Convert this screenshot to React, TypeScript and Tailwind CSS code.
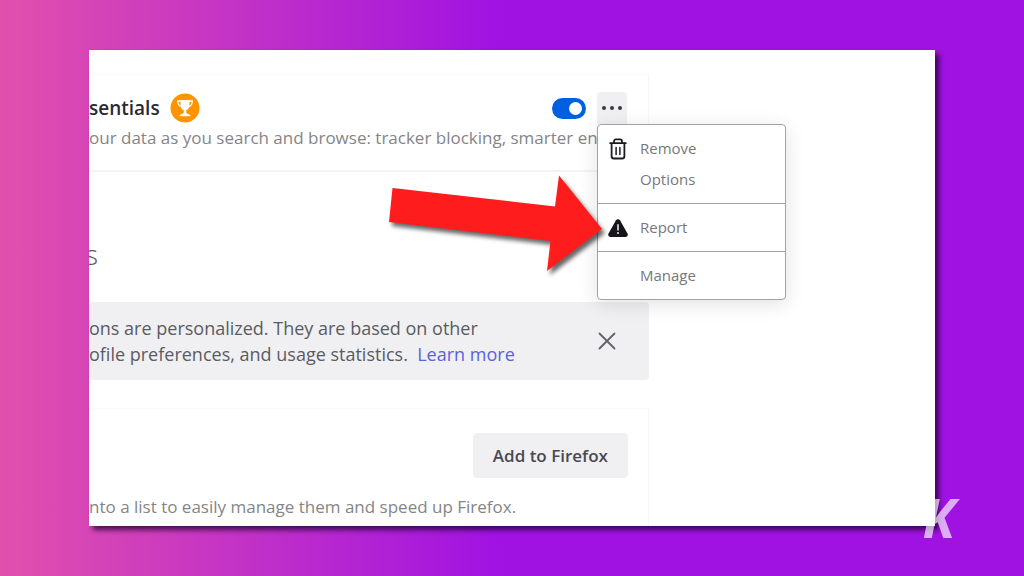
import React, { useState } from 'react';

interface MenuItem {
  label: string;
  icon?: React.ReactNode;
}

function TrashIcon() {
  return (
    <svg viewBox="0 0 18 22" className="h-[22px] w-[18px]" fill="none" stroke="#1c1b22" strokeWidth="1.8" strokeLinecap="round" aria-hidden="true">
      <path d="M1.2 5.2h15.6" />
      <path d="M5 5V3.4C5 2.2 5.8 1.4 7 1.4h4c1.2 0 2 .8 2 2V5" />
      <path d="M2.6 5.4v12.8c0 1.4.9 2.3 2.3 2.3h8.2c1.4 0 2.3-.9 2.3-2.3V5.4" />
      <path d="M7.1 9.6v6.8M10.9 9.6v6.8" strokeWidth="1.5" />
    </svg>
  );
}

function WarningIcon() {
  return (
    <svg viewBox="0 0 20 18" className="h-[18px] w-5" aria-hidden="true">
      <path d="M8 1.3a2.3 2.3 0 0 1 4 0l7.5 13.3c.9 1.6-.2 3.4-2 3.4h-15c-1.8 0-2.9-1.8-2-3.4z" fill="#151419" />
      <path d="M10 5.8v5" stroke="#d8d8da" strokeWidth="1.7" strokeLinecap="round" />
      <circle cx="10" cy="14" r="1.1" fill="#d8d8da" />
    </svg>
  );
}

function TrophyBadge() {
  return (
    <svg viewBox="0 0 30 30" className="size-[30px]" role="img" aria-label="Recommended">
      <circle cx="15" cy="15" r="14.5" fill="#ff9400" />
      <path d="M10.5 7h9v5.3c0 2.6-1.5 4.4-3.2 5V20c0 1 4.200.8 4.200 3.200h-11c0-2.400 4.200-2.200 4.200-3.200v-2.700c-1.700-.6-3.200-2.400-3.200-5z" fill="#fff" />
      <path d="M11 8H7.7c0 3.4 1.200 5.200 4 5.600M19 8h3.300c0 3.400-1.200 5.200-4 5.600" fill="none" stroke="#fff" strokeWidth="1.3" />
    </svg>
  );
}

function PointerArrow() {
  return (
    <svg
      viewBox="0 0 224 110"
      className="pointer-events-none absolute top-[46px] -left-[213px] z-20 h-[110px] w-[224px] overflow-visible drop-shadow-[3px_4px_2px_rgba(0,0,0,0.6)]"
      aria-hidden="true"
    >
      <path d="M8.5 18 171 36.5l4-31L218 59l-55 42 3.5-30L5 52z" fill="#ff1c1c" />
    </svg>
  );
}

// Groups are split by a divider line
const menuGroups: MenuItem[][] = [
  [{ label: 'Remove', icon: <TrashIcon /> }, { label: 'Options' }],
  [{ label: 'Report', icon: <WarningIcon /> }],
  [{ label: 'Manage' }],
];

function MoreOptions() {
  return (
    <div className="relative">
      <button type="button" aria-label="More options" aria-expanded="true" className="flex h-8 w-[30px] items-center justify-center gap-1 rounded-t-sm bg-[#f0f0f2]">
        <span className="size-1 rounded-full bg-[#3a3940]" />
        <span className="size-1 rounded-full bg-[#3a3940]" />
        <span className="size-1 rounded-full bg-[#3a3940]" />
      </button>

      <div className="absolute top-full left-0 z-10">
        <div role="menu" className="w-[189px] divide-y divide-[#a2a2a4] rounded border border-[#a2a2a4] bg-white shadow-[0_4px_20px_rgba(0,0,0,0.12)]">
          {menuGroups.map((group) => (
            <div key={group[0].label} className="py-2">
              {group.map((item) => (
                <button key={item.label} type="button" role="menuitem" className="flex h-[31px] w-full items-center gap-3 px-[10px] text-left text-[15px] text-[#77777c]">
                  <span className="flex w-5 justify-center">{item.icon}</span>
                  {item.label}
                </button>
              ))}
            </div>
          ))}
        </div>
        <PointerArrow />
      </div>
    </div>
  );
}

export default function App() {
  const [enabled, setEnabled] = useState(true);
  const [showNotice, setShowNotice] = useState(true);

  return (
    <div className="relative min-h-screen bg-[linear-gradient(90deg,#e250ac_0%,#a012e2_49%)] px-[89px] py-[50px] font-['Open_Sans',sans-serif]">
      <main className="overflow-hidden bg-white pt-6 shadow-[4px_4px_5px_rgba(30,0,50,0.75)]">
        <div className="w-full max-w-[560px]">
          {/* Installed add-on */}
          <section className="border-t border-r border-b-2 border-t-[#fafafa] border-r-[#f7f7f8] border-b-[#f4f4f5] pt-[17px] pb-[18px]">
            <div className="flex items-center pr-[21px]">
              <h2 className="text-[19px] font-semibold text-[#2b2a33]">sentials</h2>
              <span className="ml-[10px]"><TrophyBadge /></span>
              <input
                type="checkbox"
                role="switch"
                aria-label="Enable extension"
                checked={enabled}
                onChange={(e) => setEnabled(e.target.checked)}
                className="mr-[11px] ml-auto flex h-[21px] w-[34px] appearance-none items-center rounded-full bg-[#8f8f9d] px-1 before:size-[13px] before:rounded-full before:bg-white checked:justify-end checked:bg-[#0060df]"
              />
              <MoreOptions />
            </div>
            <p className="overflow-hidden text-[17px] leading-7 whitespace-nowrap text-[#858587]">
              our data as you search and browse: tracker blocking, smarter en
            </p>
          </section>

          <h1 className="-ml-1 pt-[62px] pb-7 text-[28px] leading-10 font-light text-[#5b5b66]">s</h1>

          {/* Personalization notice */}
          {showNotice && (
            <aside className="flex items-center justify-between rounded-sm bg-[#f0f0f3] py-[13px] pr-8 text-[18px] leading-[26px] text-[#5b5b62]">
              <p>
                ons are personalized. They are based on other
                <br />
                ofile preferences, and usage statistics.&nbsp; <a href="#learn-more" className="text-[#5a62dc]">Learn more</a>
              </p>
              <button type="button" aria-label="Dismiss" onClick={() => setShowNotice(false)}>
                <svg viewBox="0 0 20 20" className="size-5" fill="none" stroke="#626267" strokeWidth="1.8" strokeLinecap="round" aria-hidden="true">
                  <path d="m2.5 2.5 15 15m0-15-15 15" />
                </svg>
              </button>
            </aside>
          )}

          {/* Recommended add-on */}
          <section className="mt-7 border-t border-r border-t-[#fbfbfb] border-r-[#f7f7f8] pt-6 pb-[5px]">
            <div className="flex justify-end pr-5">
              <button type="button" className="h-[45px] rounded bg-[#f0f0f2] px-5 text-[17px] font-semibold text-[#4a4952]">
                Add to Firefox
              </button>
            </div>
            <p className="pt-[15px] text-[17px] leading-7 whitespace-nowrap text-[#858587]">
              nto a list to easily manage them and speed up Firefox.
            </p>
          </section>
        </div>
      </main>

      <span className="absolute right-[69px] bottom-[39px] text-[53px] leading-[38px] font-bold text-white/65 italic">K</span>
    </div>
  );
}
